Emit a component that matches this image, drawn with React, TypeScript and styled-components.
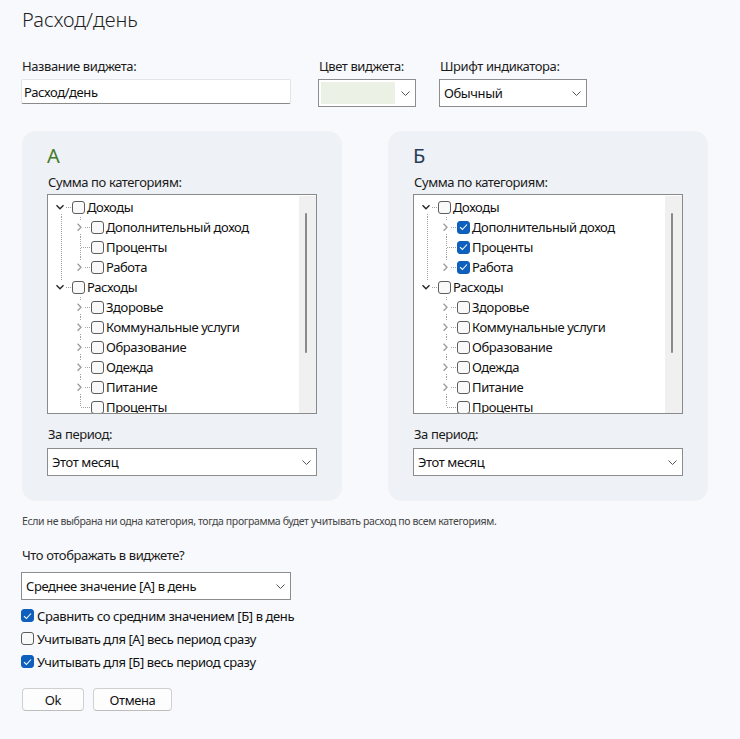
import React from "react";
import styled, { createGlobalStyle } from "styled-components";

const GlobalStyle = createGlobalStyle`
  html, body { margin: 0; padding: 0; background: #f8f9fc; }
  body {
    font-family: "Noto Sans", "Open Sans", sans-serif;
    font-size: 13px;
    letter-spacing: -0.4px;
    color: #1a1a1a;
  }
  * { box-sizing: border-box; }
`;

const Page = styled.div`
  width: 740px;
  min-height: 739px;
  padding: 7px 0 0 21px;
  display: flex;
  flex-direction: column;
`;

const Title = styled.h1`
  margin: 0 0 0 1px;
  font-size: 20px;
  line-height: 26px;
  font-weight: 300;
  letter-spacing: 0;
  color: #1f1f1f;
`;

const FieldRow = styled.div`
  display: flex;
  margin-top: 24px;
`;

const Field = styled.div<{ $width: number; $gap?: number }>`
  width: ${(p) => p.$width}px;
  margin-left: ${(p) => p.$gap ?? 0}px;
  display: flex;
  flex-direction: column;
  gap: 4px;
`;

const Label = styled.div`
  font-size: 13px;
  line-height: 18px;
  color: #1b1b1b;
  padding-left: 1px;
  white-space: nowrap;
`;

const TextInput = styled.input`
  height: 25px;
  border: 1px solid #e4e4e4;
  border-bottom-color: #8a8a8a;
  border-radius: 2px;
  background: #fff;
  font: inherit;
  letter-spacing: inherit;
  color: #111;
  padding: 0 2px;
  outline: none;
`;

const SelectBox = styled.div<{ $width?: number }>`
  height: 28px;
  width: ${(p) => (p.$width ? `${p.$width}px` : "auto")};
  border: 1px solid #8d8d8d;
  background: #fff;
  display: flex;
  align-items: center;
  gap: 6px;
  padding: 0 5px 0 4px;
`;

const SelectValue = styled.span`
  flex: 1;
  white-space: nowrap;
  color: #111;
`;

const Swatch = styled.span<{ $color: string }>`
  flex: 1;
  align-self: stretch;
  margin: 2px 0 2px -2px;
  background: ${(p) => p.$color};
`;

const PanelsRow = styled.div`
  display: flex;
  gap: 46px;
  margin: 24px 0 0 1px;
`;

const Panel = styled.section`
  width: 320px;
  background: #eef1f5;
  border-radius: 14px;
  padding: 13px 25px 25px;
  display: flex;
  flex-direction: column;
`;

const PanelHeading = styled.h2<{ $color: string }>`
  margin: 0;
  font-size: 20px;
  line-height: 24px;
  font-weight: 400;
  letter-spacing: 0;
  color: ${(p) => p.$color};
`;

const PanelLabel = styled(Label)<{ $top: number }>`
  margin-top: ${(p) => p.$top}px;
`;

const TreeBox = styled.div`
  margin-top: 3px;
  height: 220px;
  border: 1px solid #8a8a8a;
  background: #fff;
  display: flex;
`;

const TreeBody = styled.div`
  flex: 1;
  overflow: hidden;
  padding: 2px 0 0 5px;
`;

const ScrollTrack = styled.div`
  width: 17px;
  margin-top: 1px;
  background: #f0f0f0;
  display: flex;
  padding: 17px 0 0 6px;
`;

const ScrollThumb = styled.div`
  width: 2px;
  height: 140px;
  border-radius: 1px;
  background: #8a8a8a;
`;

const TreeRow = styled.div`
  display: flex;
  align-items: center;
  height: 20px;
  white-space: nowrap;
`;

const TreeText = styled.span`
  margin-left: 2px;
  line-height: 20px;
  color: #111;
`;

const Box = styled.span<{ $checked: boolean }>`
  width: 13px;
  height: 13px;
  flex: none;
  border-radius: 3px;
  border: 1px solid ${(p) => (p.$checked ? "#0f5fbd" : "#5c5c5c")};
  background: ${(p) => (p.$checked ? "#0f5fbd" : "#f9f9f9")};
  display: flex;
  align-items: center;
  justify-content: center;
`;

const PeriodSelect = styled(SelectBox)`
  margin-top: 5px;
`;

const Note = styled.p`
  margin: 13px 0 0 1px;
  font-size: 10.5px;
  line-height: 15px;
  letter-spacing: -0.37px;
  color: #444;
`;

const Question = styled(Label)`
  margin-top: 17px;
`;

const WhatSelect = styled(SelectBox)`
  margin-top: 8px;
`;

const Options = styled.div`
  margin-top: 4px;
  display: flex;
  flex-direction: column;
`;

const OptionRow = styled.label`
  display: flex;
  align-items: center;
  gap: 3px;
  height: 23px;
  color: #111;
`;

const Buttons = styled.div`
  margin: 15px 0 0 1px;
  display: flex;
  gap: 9px;
`;

const Button = styled.button<{ $width: number }>`
  width: ${(p) => p.$width}px;
  height: 23px;
  border: 1px solid #d0d0d0;
  border-bottom-color: #bdbdbd;
  border-radius: 4px;
  background: #fdfdfd;
  font: inherit;
  letter-spacing: inherit;
  color: #111;
  padding: 0;
`;

const Chevron = () => (
  <svg width="9" height="5" viewBox="0 0 9 5">
    <path d="M0.5 0.5 L4.5 4.5 L8.5 0.5" fill="none" stroke="#555" strokeWidth="1" />
  </svg>
);

const Check = ({ checked }: { checked: boolean }) => (
  <Box $checked={checked}>
    {checked && (
      <svg width="9" height="8" viewBox="0 0 9 8">
        <path d="M1 4.2 L3.4 6.5 L8 1.5" fill="none" stroke="#fff" strokeWidth="1.1" />
      </svg>
    )}
  </Box>
);

type Node = { label: string; children?: Node[]; expanded?: boolean; hasChildren?: boolean; id: string };

const tree: Node[] = [
  {
    id: "inc",
    label: "Доходы",
    expanded: true,
    children: [
      { id: "extra", label: "Дополнительный доход", hasChildren: true },
      { id: "pct", label: "Проценты" },
      { id: "work", label: "Работа", hasChildren: true },
    ],
  },
  {
    id: "exp",
    label: "Расходы",
    expanded: true,
    children: [
      { id: "health", label: "Здоровье", hasChildren: true },
      { id: "util", label: "Коммунальные услуги", hasChildren: true },
      { id: "edu", label: "Образование", hasChildren: true },
      { id: "cloth", label: "Одежда", hasChildren: true },
      { id: "food", label: "Питание", hasChildren: true },
      { id: "pct2", label: "Проценты" },
    ],
  },
];

type Flat = {
  node: Node;
  level: number;
  guides: boolean[];
  top: boolean;
  bottom: boolean;
};

function flatten(nodes: Node[], level: number, guides: boolean[], out: Flat[]) {
  nodes.forEach((n, i) => {
    const last = i === nodes.length - 1;
    out.push({ node: n, level, guides, top: level > 0 || i > 0, bottom: !last });
    if (n.children && n.expanded) flatten(n.children, level + 1, [...guides, !last], out);
  });
  return out;
}

const rows = flatten(tree, 0, [], []);

const dot = { stroke: "#a3a3a3", strokeWidth: 1, strokeDasharray: "1 1" };

const GuideCell = ({ line }: { line: boolean }) => (
  <svg width="19" height="20" viewBox="0 0 19 20" style={{ flex: "none" }}>
    {line && <line x1="8.5" y1="0" x2="8.5" y2="20" {...dot} />}
  </svg>
);

const ConnectorCell = ({
  top,
  bottom,
  expander,
}: {
  top: boolean;
  bottom: boolean;
  expander: "open" | "closed" | null;
}) => (
  <svg width="19" height="20" viewBox="0 0 19 20" style={{ flex: "none" }}>
    {top && <line x1="8.5" y1="0" x2="8.5" y2="10" {...dot} />}
    {bottom && <line x1="8.5" y1="11" x2="8.5" y2="20" {...dot} />}
    <line x1="9" y1="10.5" x2="19" y2="10.5" {...dot} />
    {expander && <rect x="2" y="4" width="10" height="12" fill="#fff" />}
    {expander === "open" && (
      <path d="M3.5 8.3 L7 11.8 L10.5 8.3" fill="none" stroke="#262626" strokeWidth="1.4" />
    )}
    {expander === "closed" && (
      <path d="M5.6 6.8 L9 10.3 L5.6 13.8" fill="none" stroke="#9b9b9b" strokeWidth="1.3" />
    )}
  </svg>
);

const CategoryTree = ({ checked }: { checked: string[] }) => (
  <TreeBox>
    <TreeBody>
      {rows.map((r) => (
        <TreeRow key={r.node.id}>
          {r.guides.map((g, i) => (
            <GuideCell key={i} line={g} />
          ))}
          <ConnectorCell
            top={r.top}
            bottom={r.bottom}
            expander={r.node.expanded ? "open" : r.node.hasChildren ? "closed" : null}
          />
          <Check checked={checked.includes(r.node.id)} />
          <TreeText>{r.node.label}</TreeText>
        </TreeRow>
      ))}
    </TreeBody>
    <ScrollTrack>
      <ScrollThumb />
    </ScrollTrack>
  </TreeBox>
);

const SidePanel = ({ name, color, checked }: { name: string; color: string; checked: string[] }) => (
  <Panel>
    <PanelHeading $color={color}>{name}</PanelHeading>
    <PanelLabel $top={5}>Сумма по категориям:</PanelLabel>
    <CategoryTree checked={checked} />
    <PanelLabel $top={11}>За период:</PanelLabel>
    <PeriodSelect>
      <SelectValue>Этот месяц</SelectValue>
      <Chevron />
    </PeriodSelect>
  </Panel>
);

export default function App() {
  return (
    <>
      <GlobalStyle />
      <Page>
        <Title>Расход/день</Title>
        <FieldRow>
          <Field $width={270}>
            <Label>Название виджета:</Label>
            <TextInput defaultValue="Расход/день" />
          </Field>
          <Field $width={98} $gap={27}>
            <Label>Цвет виджета:</Label>
            <SelectBox>
              <Swatch $color="#ecf1e5" />
              <Chevron />
            </SelectBox>
          </Field>
          <Field $width={148} $gap={23}>
            <Label>Шрифт индикатора:</Label>
            <SelectBox>
              <SelectValue>Обычный</SelectValue>
              <Chevron />
            </SelectBox>
          </Field>
        </FieldRow>

        <PanelsRow>
          <SidePanel name="А" color="#437a2b" checked={[]} />
          <SidePanel name="Б" color="#2b3c57" checked={["extra", "pct", "work"]} />
        </PanelsRow>

        <Note>Если не выбрана ни одна категория, тогда программа будет учитывать расход по всем категориям.</Note>

        <Question>Что отображать в виджете?</Question>
        <WhatSelect $width={270}>
          <SelectValue>Среднее значение [А] в день</SelectValue>
          <Chevron />
        </WhatSelect>

        <Options>
          <OptionRow>
            <Check checked />
            Сравнить со средним значением [Б] в день
          </OptionRow>
          <OptionRow>
            <Check checked={false} />
            Учитывать для [А] весь период сразу
          </OptionRow>
          <OptionRow>
            <Check checked />
            Учитывать для [Б] весь период сразу
          </OptionRow>
        </Options>

        <Buttons>
          <Button $width={62}>Ok</Button>
          <Button $width={79}>Отмена</Button>
        </Buttons>
      </Page>
    </>
  );
}
